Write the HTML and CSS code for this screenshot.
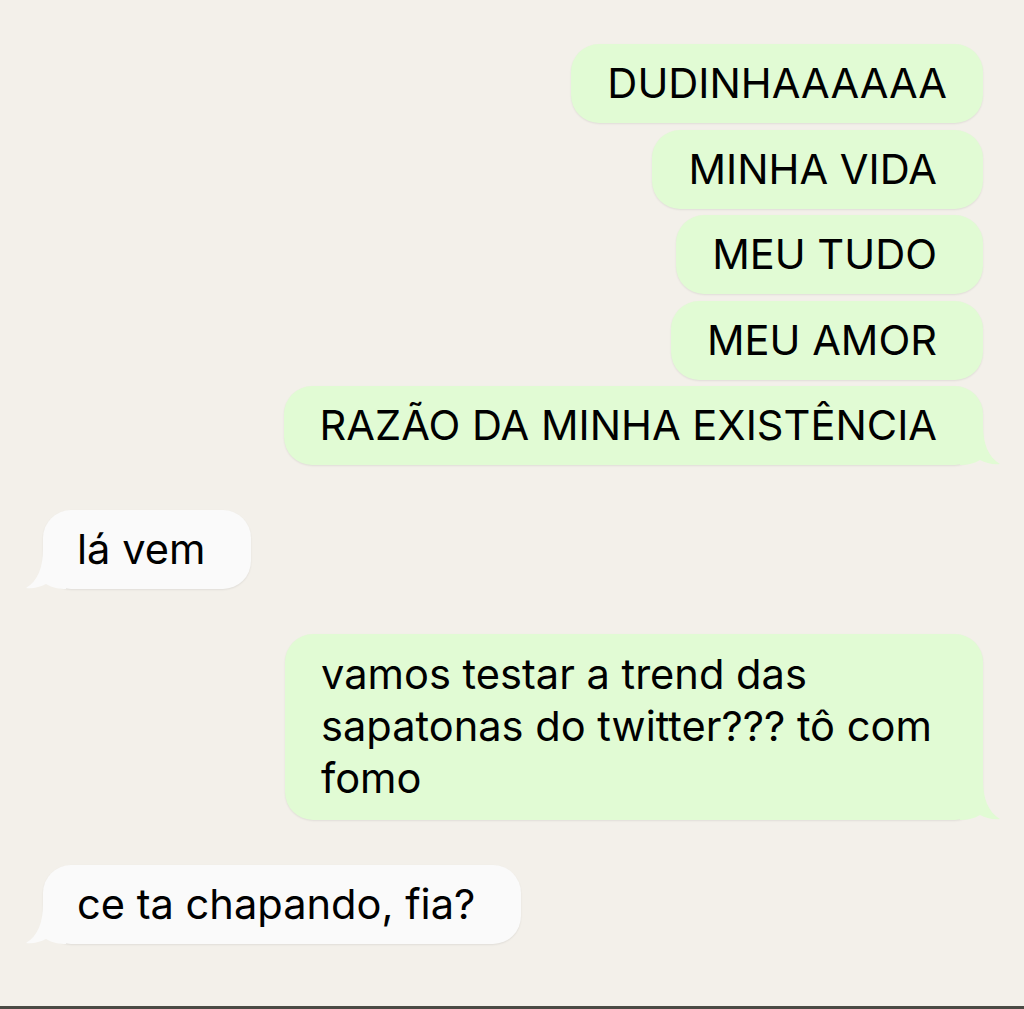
FILE: index.html
```html
<!DOCTYPE html>
<html lang="pt-BR">
<head>
    <meta charset="UTF-8">
    <meta name="viewport" content="width=device-width, initial-scale=1.0">
    <title>Conversa</title>
    <link rel="stylesheet" href="styles.css">
</head>
<body>
    <div class="chat">
        <div class="group">
            <div class="msg sent first">DUDINHAAAAAA</div>
            <div class="msg sent">MINHA VIDA</div>
            <div class="msg sent">MEU TUDO</div>
            <div class="msg sent">MEU AMOR</div>
            <div class="msg sent tail">
                RAZÃO DA MINHA EXISTÊNCIA
                <svg class="tail-shape" width="40" height="40" viewBox="0 0 40 40"><path d="M23 0 C23 18 28 32 40 39 C33 40 26 38 20 35 C14 39 6 40 0 40 L0 0 Z"/></svg>
            </div>
        </div>
        <div class="group">
            <div class="msg received tail">
                lá vem
                <svg class="tail-shape" width="40" height="40" viewBox="0 0 40 40"><path d="M17 0 C17 18 12 32 0 39 C7 40 14 38 20 35 C26 39 34 40 40 40 L40 0 Z"/></svg>
            </div>
        </div>
        <div class="group">
            <div class="msg sent tail long">
                vamos testar a trend das sapatonas do twitter??? tô com fomo
                <svg class="tail-shape" width="40" height="40" viewBox="0 0 40 40"><path d="M23 0 C23 18 28 32 40 39 C33 40 26 38 20 35 C14 39 6 40 0 40 L0 0 Z"/></svg>
            </div>
        </div>
        <div class="group">
            <div class="msg received tail">
                ce ta chapando, fia?
                <svg class="tail-shape" width="40" height="40" viewBox="0 0 40 40"><path d="M17 0 C17 18 12 32 0 39 C7 40 14 38 20 35 C26 39 34 40 40 40 L40 0 Z"/></svg>
            </div>
        </div>
    </div>
    <div class="bottom-line"></div>
</body>
</html>
```

FILE: styles.css
```css
body {
    margin: 0;
    min-height: 100vh;
    display: flex;
    flex-direction: column;
    background-color: #f3f0ea;
    font-family: Inter, "Liberation Sans", sans-serif;
    color: #000;
}

.chat {
    display: flex;
    flex-direction: column;
    gap: 45px;
    padding: 44px 41px 0 43px;
}

.group {
    display: flex;
    flex-direction: column;
    gap: 6.5px;
}

.msg {
    position: relative;
    font-size: 41.6px;
    line-height: 52px;
    padding: 13px 46px 14px 36px;
    border-radius: 28px;
    box-shadow: 0 1px 2px rgba(0, 0, 0, 0.08);
}

.sent {
    align-self: flex-end;
    background-color: #e1fbd4;
}

.sent.first {
    padding-right: 36px;
}

.received {
    align-self: flex-start;
    background-color: #fafafa;
    padding-left: 34px;
}

.long {
    max-width: 616px;
    padding-top: 14px;
    padding-bottom: 16px;
}

.tail-shape {
    position: absolute;
    bottom: 0;
}

.sent .tail-shape {
    right: -17px;
    fill: #e1fbd4;
}

.received .tail-shape {
    left: -17px;
    fill: #fafafa;
}

.bottom-line {
    margin-top: auto;
    height: 3px;
    background-color: #4a4a44;
}
```
